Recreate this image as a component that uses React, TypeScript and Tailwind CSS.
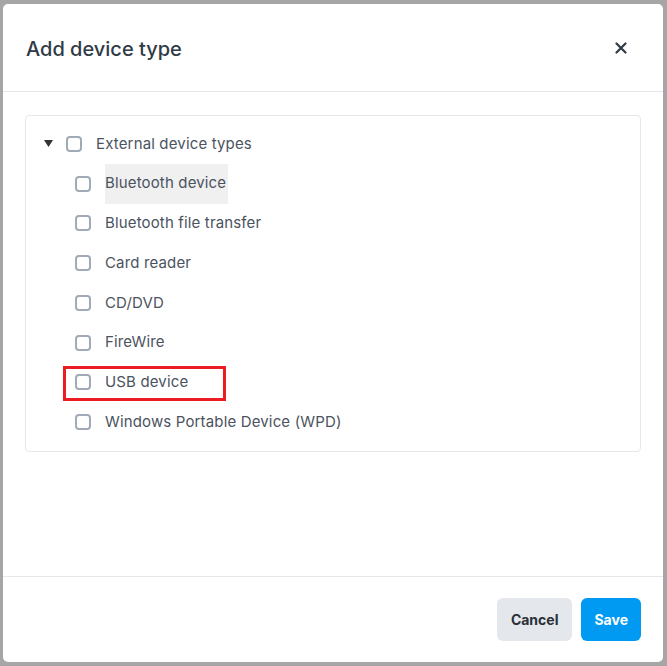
import React from "react";

const items = [
  "Bluetooth device",
  "Bluetooth file transfer",
  "Card reader",
  "CD/DVD",
  "FireWire",
  "USB device",
  "Windows Portable Device (WPD)",
];

function Checkbox() {
  return (
    <span className="block h-4 w-4 shrink-0 rounded-[4px] border-2 border-[#a0abb7] bg-white" />
  );
}

export default function App() {
  return (
    <div
      className="h-[666px] w-[667px] bg-[#a6a6a6] pl-[3px] pt-[4px]"
      style={{ fontFamily: "Inter, 'Noto Sans', sans-serif" }}
    >
      <div className="flex h-[658px] w-[660px] flex-col rounded-[5px] bg-white">
        {/* Header */}
        <div className="flex h-[88px] shrink-0 items-center justify-between border-b border-[#e5e7eb] pl-[23px] pr-[36px]">
          <h2 className="mt-[3px] text-[20px] font-medium text-[#2f3a45]">Add device type</h2>
          <button className="text-[#2f3a45]">
            <svg width="12" height="12" viewBox="0 0 12 12">
              <path d="M1.5 1.5 L10.5 10.5 M10.5 1.5 L1.5 10.5" stroke="currentColor" strokeWidth="2.2" strokeLinecap="round" />
            </svg>
          </button>
        </div>

        {/* Content */}
        <div className="flex-1 px-[22px] pt-[23px]">
          <div className="rounded-[4px] border border-[#e5e7eb] pb-[9px] pt-[8px]">
            <div className="flex h-[39.75px] items-center pl-[18px]">
              <svg width="9" height="7" viewBox="0 0 9 7" className="mr-[13px]">
                <path d="M0 0 H9 L4.5 7 Z" fill="#333" />
              </svg>
              <Checkbox />
              <span className="ml-[14px] text-[15px] tracking-[0.15px] text-[#4b5360]">External device types</span>
            </div>
            {items.map((label, i) => (
              <div key={label} className="relative flex h-[39.75px] items-center pl-[49px]">
                <Checkbox />
                <span
                  className={`ml-[14px] flex h-full items-center pr-[2px] text-[15px] tracking-[0.15px] text-[#4b5360] ${
                    i === 0 ? "bg-[#f0f0f0]" : ""
                  }`}
                >
                  {label}
                </span>
                {label === "USB device" && (
                  <span className="pointer-events-none absolute left-[37px] top-[3px] h-[35px] w-[163px] border-[3px] border-[#ec1c24]" />
                )}
              </div>
            ))}
          </div>
        </div>

        {/* Footer */}
        <div className="flex h-[86px] shrink-0 items-center justify-end gap-[9px] border-t border-[#e5e7eb] pr-[22px]">
          <button className="h-[43px] rounded-[6px] bg-[#e4e7eb] px-[14px] text-[14px] font-bold text-[#2a3038]">
            Cancel
          </button>
          <button className="h-[43px] rounded-[6px] bg-[#009af2] px-[13px] text-[14px] font-bold text-white">
            Save
          </button>
        </div>
      </div>
    </div>
  );
}
